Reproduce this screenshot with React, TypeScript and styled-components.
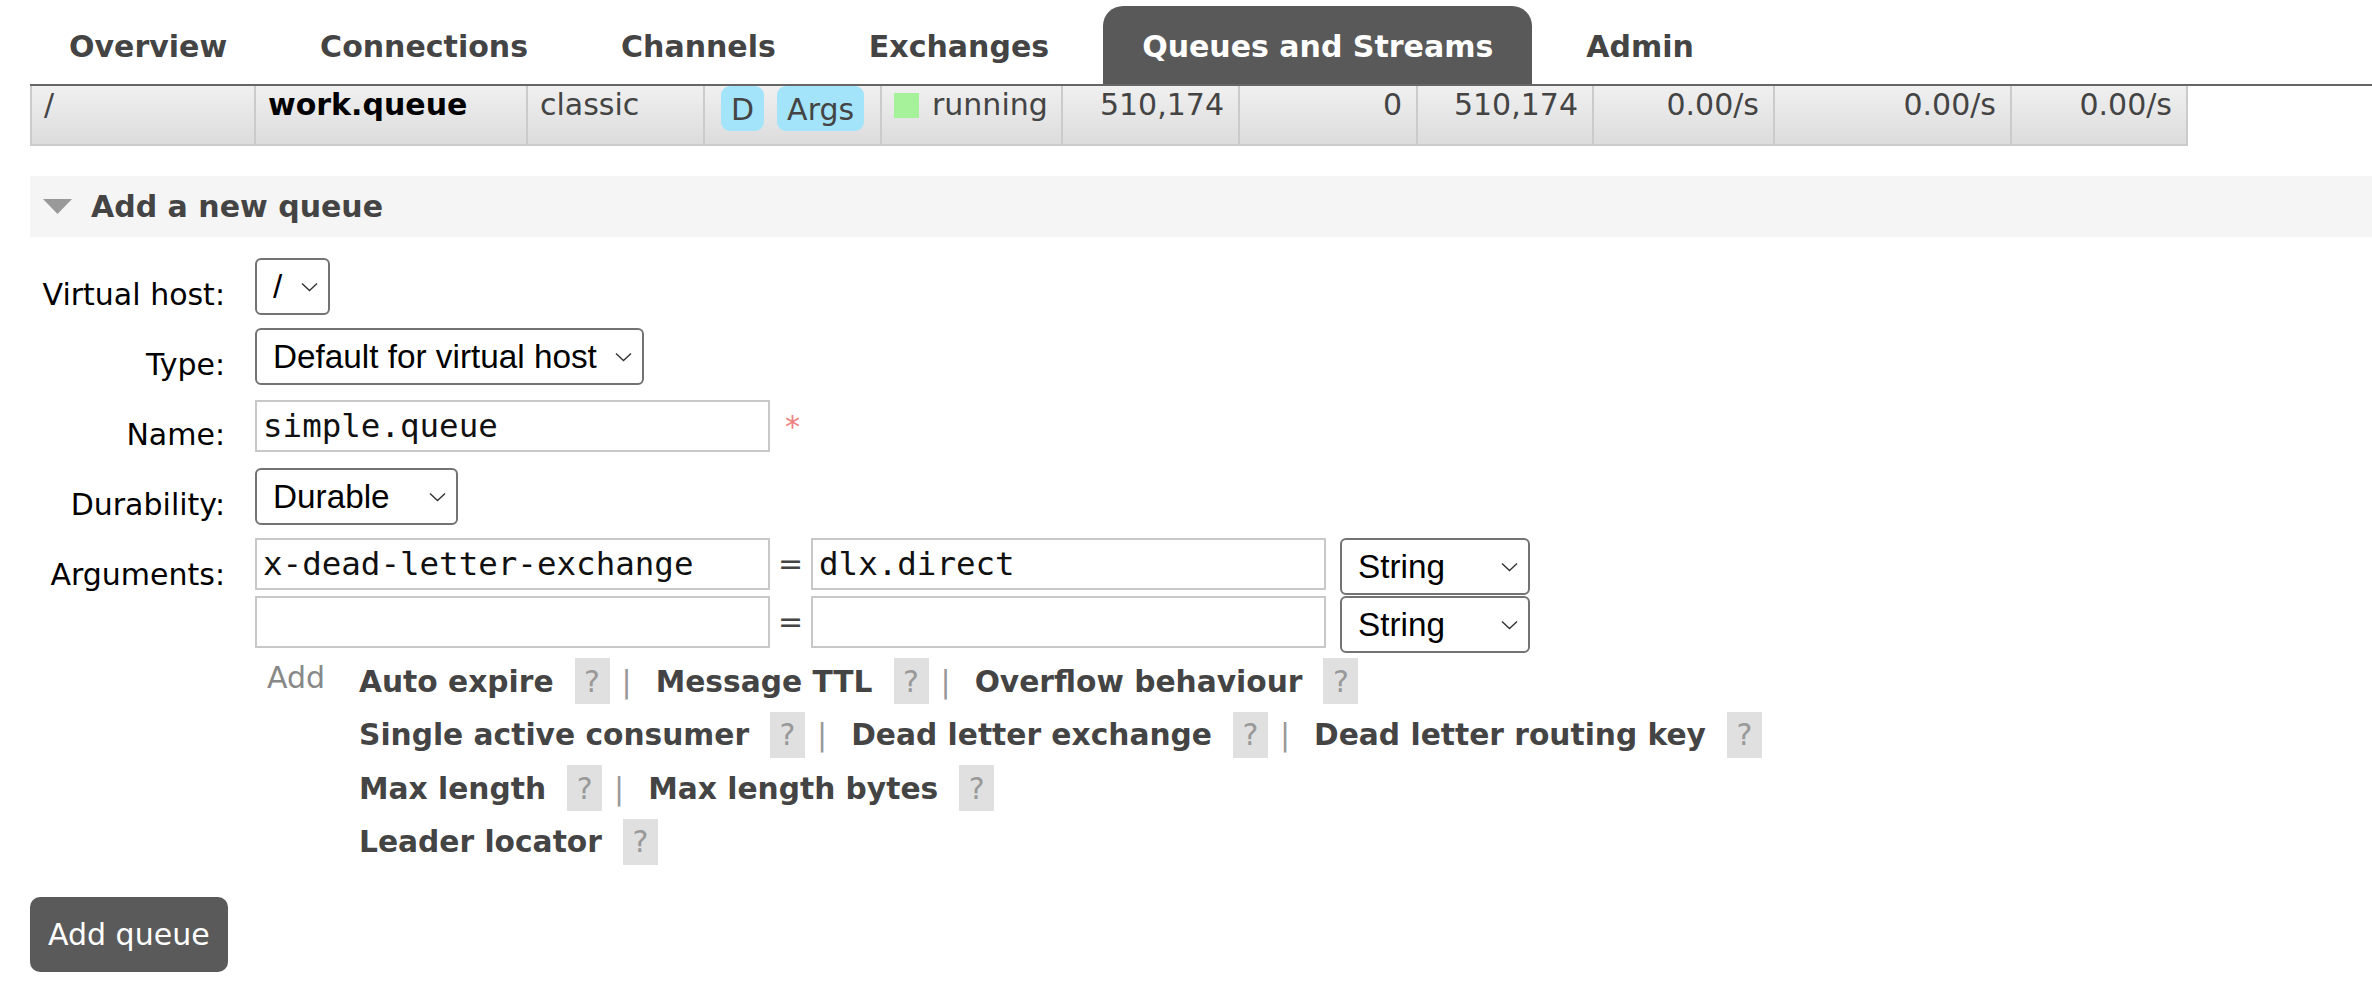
import styled, { createGlobalStyle } from "styled-components";

const GlobalStyle = createGlobalStyle`
  body {
    margin: 0;
    background: #fff;
    font-family: "DejaVu Sans", Verdana, sans-serif;
    font-size: 30px;
    color: #000;
  }
`;

const tabs = [
  "Overview",
  "Connections",
  "Channels",
  "Exchanges",
  "Queues and Streams",
  "Admin",
];

// width of each column, border to border
const columns = [224, 272, 177, 177, 181, 177, 178, 176, 181, 237, 178];

const helpLinks = [
  ["Auto expire", "Message TTL", "Overflow behaviour"],
  ["Single active consumer", "Dead letter exchange", "Dead letter routing key"],
  ["Max length", "Max length bytes"],
  ["Leader locator"],
];

function Chevron() {
  return (
    <ChevronIcon width="17" height="10" viewBox="0 0 17 10">
      <polyline
        points="1,1.5 8.5,8.5 16,1.5"
        fill="none"
        stroke="#333"
        strokeWidth="1.4"
      />
    </ChevronIcon>
  );
}

function Select({ width, options }: { width: number; options: string[] }) {
  return (
    <SelectWrap>
      <SelectBox $width={width} defaultValue={options[0]}>
        {options.map((o) => (
          <option key={o}>{o}</option>
        ))}
      </SelectBox>
      <Chevron />
    </SelectWrap>
  );
}

export default function App() {
  return (
    <Page>
      <GlobalStyle />
      <Menu>
        {tabs.map((t) => (
          <Tab key={t} $active={t === "Queues and Streams"}>
            {t}
          </Tab>
        ))}
      </Menu>

      <QueueRow>
        <Cell>/</Cell>
        <Cell $bold>work.queue</Cell>
        <Cell>classic</Cell>
        <BadgeCell>
          <Badge>D</Badge>
          <Badge>Args</Badge>
        </BadgeCell>
        <Cell>
          <StateBox />
          running
        </Cell>
        <Cell $num>510,174</Cell>
        <Cell $num>0</Cell>
        <Cell $num>510,174</Cell>
        <Cell $num>0.00/s</Cell>
        <Cell $num>0.00/s</Cell>
        <Cell $num>0.00/s</Cell>
      </QueueRow>

      <SectionHeader>
        <svg width="29" height="15" viewBox="0 0 29 15">
          <polygon points="0,0 29,0 14.5,15" fill="#999" />
        </svg>
        <SectionTitle>Add a new queue</SectionTitle>
      </SectionHeader>

      <Form>
        <Label>Virtual host:</Label>
        <div>
          <Select width={75} options={["/"]} />
        </div>

        <Label>Type:</Label>
        <div>
          <Select
            width={389}
            options={["Default for virtual host", "Classic", "Quorum", "Stream"]}
          />
        </div>

        <Label>Name:</Label>
        <NameField>
          <TextInput $width={515} defaultValue="simple.queue" />
          <Mandatory>*</Mandatory>
        </NameField>

        <Label>Durability:</Label>
        <div>
          <Select width={203} options={["Durable", "Transient"]} />
        </div>

        <Label>Arguments:</Label>
        <div>
          <ArgRows>
            <ArgRow>
              <TextInput $width={515} defaultValue="x-dead-letter-exchange" />
              <Equals>=</Equals>
              <TextInput $width={515} defaultValue="dlx.direct" />
              <Select width={190} options={["String", "Number", "Boolean", "List"]} />
            </ArgRow>
            <ArgRow>
              <TextInput $width={515} defaultValue="" />
              <Equals>=</Equals>
              <TextInput $width={515} defaultValue="" />
              <Select width={190} options={["String", "Number", "Boolean", "List"]} />
            </ArgRow>
          </ArgRows>

          <ArgLinks>
            <AddLabel>Add</AddLabel>
            <LinkLines>
              {helpLinks.map((line, i) => (
                <LinkLine key={i}>
                  {line.map((name, j) => (
                    <LinkItem key={name}>
                      {j > 0 && <Sep>|</Sep>}
                      <ArgLink>{name}</ArgLink>
                      <Help>?</Help>
                    </LinkItem>
                  ))}
                </LinkLine>
              ))}
            </LinkLines>
          </ArgLinks>
        </div>
      </Form>

      <AddButton>Add queue</AddButton>
    </Page>
  );
}

// page
const Page = styled.div`
  padding: 6px 0 0 30px;
`;

// tabs
const Menu = styled.div`
  display: flex;
  gap: 15px;
  border-bottom: 2px solid #666;
`;

const Tab = styled.div<{ $active: boolean }>`
  height: 78px;
  box-sizing: border-box;
  padding: 23px 39px 0;
  line-height: 35px;
  font-weight: bold;
  white-space: nowrap;
  color: ${(p) => (p.$active ? "#fff" : "#444")};
  background: ${(p) => (p.$active ? "#595959" : "transparent")};
  border-radius: 20px 20px 0 0;
`;

// queue list row
const QueueRow = styled.div`
  display: grid;
  grid-template-columns: ${columns.map((c) => `${c}px`).join(" ")};
  width: fit-content;
  height: 60px;
  box-sizing: border-box;
  border-bottom: 2px solid #cbcbcb;
  background: linear-gradient(#f0f0f0, #dcdcdc);
  color: #444;
`;

const Cell = styled.div<{ $num?: boolean; $bold?: boolean }>`
  display: flex;
  align-items: flex-start;
  justify-content: ${(p) => (p.$num ? "flex-end" : "flex-start")};
  padding: 1px ${(p) => (p.$num ? "14px" : "12px")} 0 12px;
  line-height: 35px;
  border-left: 2px solid #cbcbcb;
  font-weight: ${(p) => (p.$bold ? "bold" : "normal")};
  color: ${(p) => (p.$bold ? "#000" : "#444")};
  white-space: nowrap;

  &:last-child {
    border-right: 2px solid #cbcbcb;
  }
`;

const BadgeCell = styled.div`
  display: flex;
  align-items: flex-start;
  gap: 13px;
  padding-left: 16px;
  border-left: 2px solid #cbcbcb;
`;

const Badge = styled.span`
  height: 45px;
  box-sizing: border-box;
  padding: 6px 10px 0;
  line-height: 35px;
  background: #a3e4fb;
  border-radius: 9px;
  color: #444;
`;

const StateBox = styled.span`
  width: 25px;
  height: 25px;
  margin: 6px 13px 0 0;
  background: #a6f29a;
  flex-shrink: 0;
`;

// collapsible header
const SectionHeader = styled.div`
  display: flex;
  align-items: center;
  gap: 19px;
  height: 61px;
  margin-top: 30px;
  padding-left: 13px;
  background: #f5f5f5;
`;

const SectionTitle = styled.span`
  font-weight: bold;
  color: #444;
  line-height: 35px;
`;

// form
const Form = styled.div`
  display: grid;
  grid-template-columns: 195px 1fr;
  grid-auto-rows: minmax(70px, auto);
  column-gap: 30px;
  margin-top: 21px;
`;

const Label = styled.div`
  padding-top: 19px;
  line-height: 35px;
  text-align: right;
  white-space: nowrap;
  color: #000;
`;

const SelectWrap = styled.span`
  position: relative;
  display: inline-block;
`;

const SelectBox = styled.select<{ $width: number }>`
  appearance: none;
  width: ${(p) => p.$width}px;
  height: 57px;
  box-sizing: border-box;
  margin: 0;
  padding: 0 0 0 16px;
  border: 2px solid #737373;
  border-radius: 6px;
  background: #fff;
  font-family: "Liberation Sans", Arial, sans-serif;
  font-size: 33.3px;
  color: #000;
  outline: none;
`;

const ChevronIcon = styled.svg`
  position: absolute;
  right: 12px;
  top: 50%;
  transform: translateY(-50%);
  pointer-events: none;
`;

const NameField = styled.div`
  display: flex;
  align-items: flex-start;
  padding-top: 2px;
`;

const TextInput = styled.input.attrs({ type: "text" })<{ $width: number }>`
  width: ${(p) => p.$width}px;
  height: 52px;
  box-sizing: border-box;
  margin: 0;
  padding: 0 6px;
  border: 2px solid #c8c8c8;
  border-radius: 0;
  font-family: "DejaVu Sans Mono", Menlo, monospace;
  font-size: 32.5px;
  color: #111;
  outline: none;
`;

const Mandatory = styled.span`
  margin: 9px 0 0 15px;
  line-height: 35px;
  color: #f08080;
`;

const ArgRows = styled.div`
  display: flex;
  flex-direction: column;
  gap: 2px;
`;

const ArgRow = styled.div`
  display: flex;
  align-items: flex-start;
  height: 56px;

  & > span:last-child {
    margin-left: 14px;
  }
`;

const Equals = styled.span`
  width: 41px;
  height: 52px;
  line-height: 52px;
  text-align: center;
  color: #444;
`;

const ArgLinks = styled.div`
  display: grid;
  grid-template-columns: 104px auto;
  margin-top: 6px;
`;

const AddLabel = styled.div`
  padding: 2px 0 0 12px;
  line-height: 35px;
  color: #888;
`;

const LinkLines = styled.div`
  display: flex;
  flex-direction: column;
  gap: 7.6px;
`;

const LinkLine = styled.div`
  display: flex;
  align-items: center;
  height: 46px;
`;

const LinkItem = styled.div`
  display: flex;
  align-items: center;
  height: 100%;
`;

const ArgLink = styled.span`
  font-size: 29.7px;
  font-weight: bold;
  color: #444;
  white-space: nowrap;
`;

const Help = styled.span`
  display: flex;
  align-items: center;
  justify-content: center;
  width: 35px;
  height: 46px;
  margin-left: 21px;
  background: #e0e0e0;
  color: #999;
`;

const Sep = styled.span`
  padding: 0 24px 0 12px;
  color: #999;
`;

const AddButton = styled.button`
  display: block;
  height: 75px;
  margin-top: 32px;
  padding: 0 18px;
  border: none;
  border-radius: 10px;
  background: #5a5a5a;
  color: #fff;
  font-family: "DejaVu Sans", Verdana, sans-serif;
  font-size: 30px;
  cursor: pointer;
`;
